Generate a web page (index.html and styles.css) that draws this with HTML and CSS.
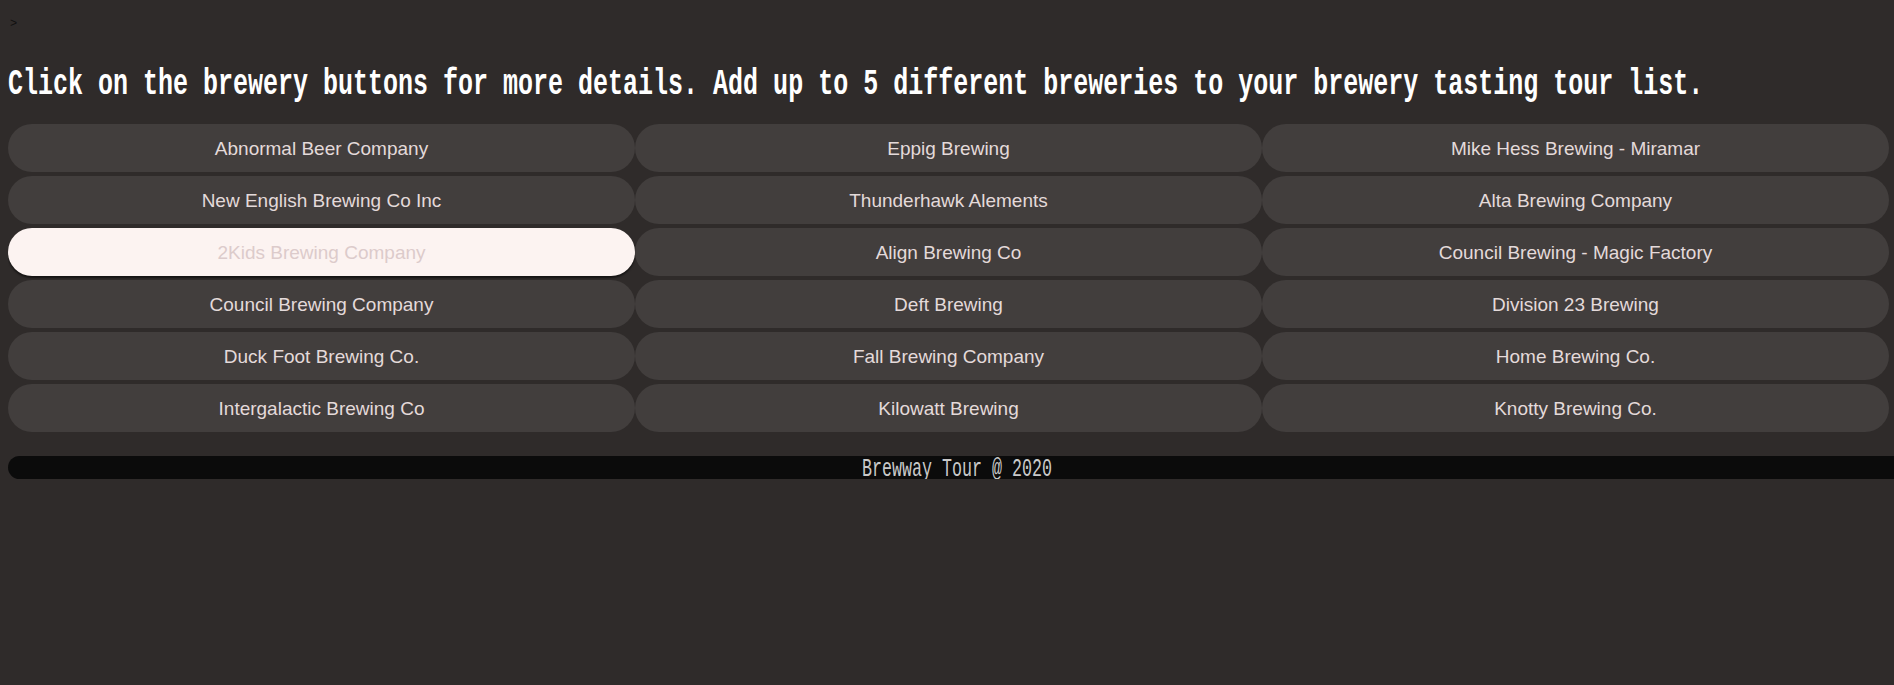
FILE: index.html
```html
<!DOCTYPE html>
<html lang="en">
<head>
<meta charset="utf-8">
<title>Brewway Tour</title>
<link rel="stylesheet" href="styles.css">
</head>
<body>
<div class="crumb">&gt;</div>
<h1 class="intro"><span class="intro-text">Click on the brewery buttons for more details. Add up to 5 different breweries to your brewery tasting tour list.</span></h1>
<div class="brewery-grid">
  <button class="brewery-btn">Abnormal Beer Company</button>
  <button class="brewery-btn">Eppig Brewing</button>
  <button class="brewery-btn">Mike Hess Brewing - Miramar</button>
  <button class="brewery-btn">New English Brewing Co Inc</button>
  <button class="brewery-btn">Thunderhawk Alements</button>
  <button class="brewery-btn">Alta Brewing Company</button>
  <button class="brewery-btn brewery-btn--active">2Kids Brewing Company</button>
  <button class="brewery-btn">Align Brewing Co</button>
  <button class="brewery-btn">Council Brewing - Magic Factory</button>
  <button class="brewery-btn">Council Brewing Company</button>
  <button class="brewery-btn">Deft Brewing</button>
  <button class="brewery-btn">Division 23 Brewing</button>
  <button class="brewery-btn">Duck Foot Brewing Co.</button>
  <button class="brewery-btn">Fall Brewing Company</button>
  <button class="brewery-btn">Home Brewing Co.</button>
  <button class="brewery-btn">Intergalactic Brewing Co</button>
  <button class="brewery-btn">Kilowatt Brewing</button>
  <button class="brewery-btn">Knotty Brewing Co.</button>
</div>
<footer class="footer"><span class="footer-text">Brewway Tour @ 2020</span></footer>
</body>
</html>
```
FILE: styles.css
```css
body {
  margin: 8px 0 8px 8px;
  background: #2f2b2a;
}
.crumb {
  height: 40px;
  box-sizing: border-box;
  padding-top: 9px;
  padding-left: 2px;
  font-family: "Liberation Mono", monospace;
  font-size: 12px;
  line-height: 14px;
  color: #111010;
}
.intro {
  margin: 27px 0 24px;
  font-family: "Liberation Mono", monospace;
  font-size: 25px;
  line-height: 25px;
  font-weight: bold;
  color: #ffffff;
  white-space: nowrap;
}
.intro-text {
  display: inline-block;
  transform: scaleY(1.5);
  transform-origin: 0 19px;
}
.brewery-grid {
  display: grid;
  grid-template-columns: repeat(3, 627px);
  row-gap: 4px;
}
.brewery-btn {
  height: 48px;
  margin: 0;
  padding: 2px 0 0;
  border: none;
  border-radius: 24px;
  background: #423e3d;
  color: #e4dada;
  font-family: "Liberation Sans", Arial, sans-serif;
  font-size: 19px;
  cursor: pointer;
}
.brewery-btn--active {
  background: #fcf3f1;
  color: #dccbcb;
  box-shadow: 0 2px 2px rgba(0, 0, 0, 0.55);
}
.footer {
  margin-top: 24px;
  height: 23px;
  box-sizing: border-box;
  padding: 6px 0 0 12px;
  border-radius: 12px 0 0 12px;
  background: #0b0b0b;
  text-align: center;
  font-family: "Liberation Mono", monospace;
  font-size: 16.67px;
  color: #c9c9c9;
}
.footer-text {
  display: inline-block;
  line-height: 17px;
  transform: scaleY(1.5);
  transform-origin: 0 13px;
}
```
